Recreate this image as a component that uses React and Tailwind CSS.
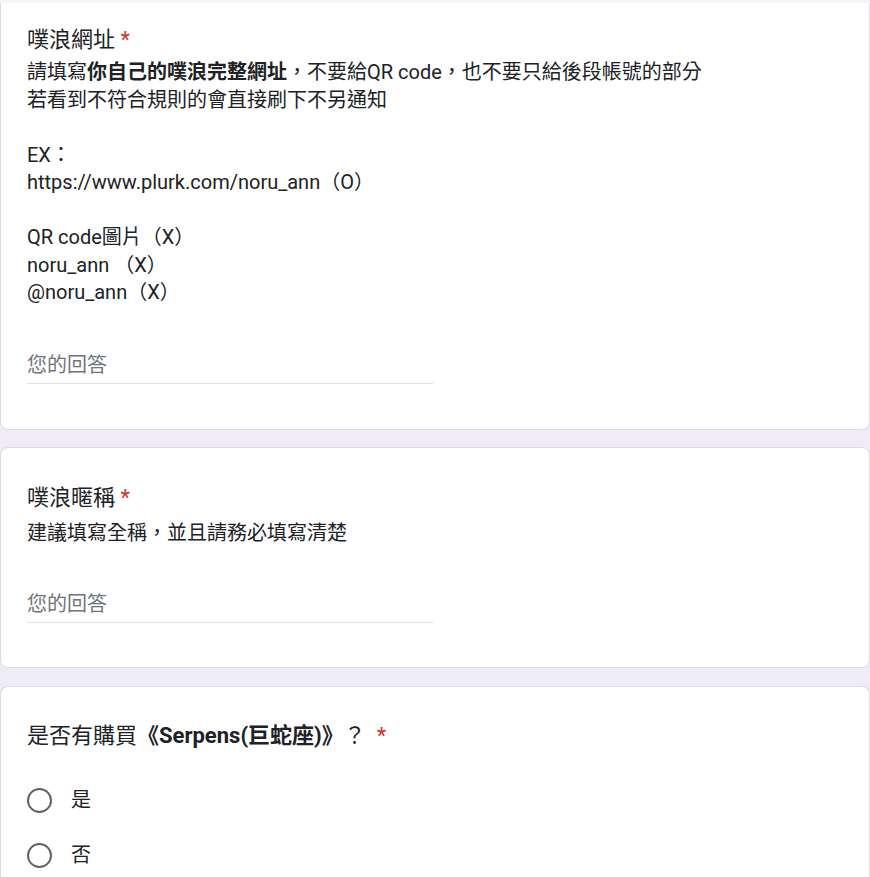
const FONT = "font-['Roboto','Noto_Sans_CJK_TC',sans-serif]";

const Required = () => <span className="text-[#d93025]"> *</span>;

const AnswerInput = () => (
  <div className="w-[406px] border-b border-[#e0e0e0] pb-1">
    <div className="text-[20px] leading-[28px] text-[#70757a]">您的回答</div>
  </div>
);

const Radio = ({ label }) => (
  <div className="flex items-center h-8">
    <div className="w-[25px] h-[25px] rounded-full border-[2.5px] border-[#5f6368] box-border" />
    <span className="ml-[19px] text-[20px] leading-[28px] text-[#202124]">{label}</span>
  </div>
);

export default function App() {
  return (
    <div className={`${FONT} bg-[#f0ebf8] min-h-[877px] w-[870px] overflow-hidden text-[#202124]`}>
      <div className="h-[3px] bg-[#f7f5fb]" />

      {/* 噗浪網址 */}
      <div className="bg-white rounded-b-lg border-x border-b border-[#dadce0] pl-[26px] pt-[22px] pb-[45px]">
        <div className="text-[22px] leading-[30px]">
          噗浪網址<Required />
        </div>
        <div className="mt-1 text-[20px] leading-[27.5px]">
          <div>
            請填寫<span className="font-bold">你自己的噗浪完整網址</span>，不要給QR code，也不要只給後段帳號的部分
          </div>
          <div>若看到不符合規則的會直接刷下不另通知</div>
          <div>&nbsp;</div>
          <div>EX：</div>
          <div>https://www.plurk.com/noru_ann（O）</div>
          <div>&nbsp;</div>
          <div>QR code圖片（X）</div>
          <div>noru_ann （X）</div>
          <div>@noru_ann（X）</div>
        </div>
        <div className="mt-[44px]">
          <AnswerInput />
        </div>
      </div>

      {/* 噗浪暱稱 */}
      <div className="mt-[17px] bg-white rounded-lg border border-[#dadce0] pl-[26px] pt-[35px] pb-[44px]">
        <div className="text-[22px] leading-[30px]">
          噗浪暱稱<Required />
        </div>
        <div className="mt-[7px] text-[20px] leading-[27.5px]">建議填寫全稱，並且請務必填寫清楚</div>
        <div className="mt-[43px]">
          <AnswerInput />
        </div>
      </div>

      {/* 購買 */}
      <div className="mt-[18px] bg-white rounded-t-lg border-x border-t border-[#dadce0] pl-[26px] pt-[34px] pb-10">
        <div className="text-[22px] leading-[30px]">
          是否有購買<span className="font-bold">《Serpens(巨蛇座)》</span>？&nbsp; <Required />
        </div>
        <div className="mt-[33px] flex flex-col gap-[23px]">
          <Radio label="是" />
          <Radio label="否" />
        </div>
      </div>
    </div>
  );
}
